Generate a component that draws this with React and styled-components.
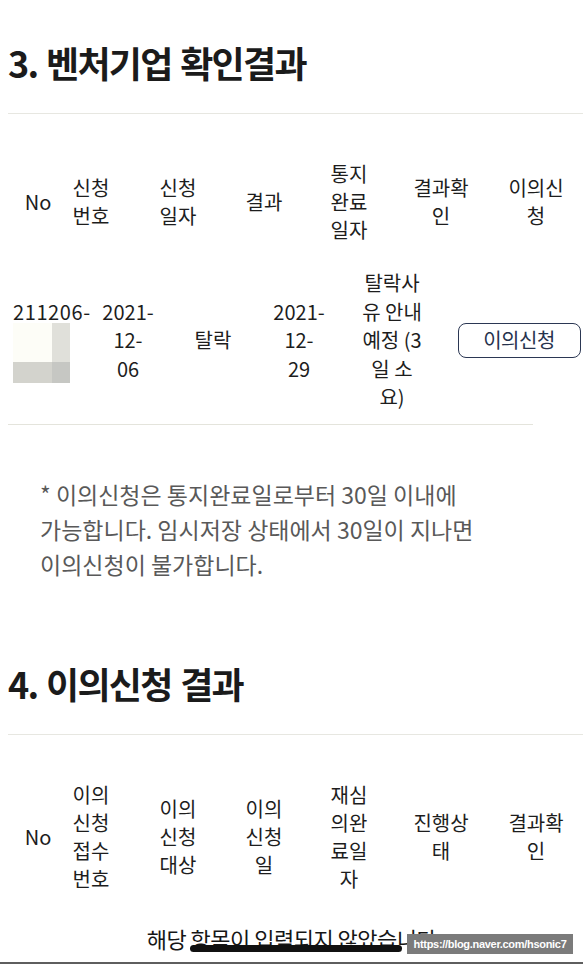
import React from "react";
import styled, { createGlobalStyle } from "styled-components";

const Global = createGlobalStyle`
  html, body { margin: 0; padding: 0; background: #fff; overflow: hidden; }
  body { font-family: "Noto Sans CJK KR", "Noto Sans", sans-serif; color: #1a1a1a; }
`;

const Page = styled.div`
  position: relative;
  width: 583px;
  height: 965px;
  overflow: hidden;
  background: #fff;
`;

const Section = styled.section`
  padding-left: 8px;
  margin-top: ${(p) => p.$top}px;
`;

const Title = styled.h2`
  margin: 0;
  font-size: 36px;
  line-height: 44px;
  font-weight: 700;
  letter-spacing: -1.7px;
  word-spacing: 2px;
  color: #1b1b1b;
  white-space: nowrap;
`;

const Divider = styled.hr`
  margin: 29px 0 0;
  border: 0;
  height: 1px;
  background: #e7e7e1;
`;

const HeadRow = styled.div`
  display: grid;
  grid-template-columns: 60px 46px 128px 44px 126px 58px 132px;
  align-items: center;
  padding-top: 46px;
  font-size: 20px;
  line-height: 28px;
  text-align: center;
  white-space: nowrap;
  color: #1d1d1d;
`;

const Cell = styled.div`
  display: flex;
  flex-direction: column;
  align-items: ${(p) => (p.$left ? "flex-start" : "center")};
  padding-left: ${(p) => (p.$left ? "5px" : "0")};
`;

const DataRow = styled.div`
  display: grid;
  grid-template-columns: 88px 64px 106px 66px 120px 134px;
  align-items: center;
  width: 525px;
  margin-top: 25px;
  padding-bottom: 12px;
  border-bottom: 1px solid #e4e4dc;
  font-size: 20px;
  line-height: 28.5px;
  text-align: center;
  white-space: nowrap;
  color: #1d1d1d;
`;

const IdText = styled.span`
  letter-spacing: 0.6px;
`;

const Mosaic = styled.div`
  display: grid;
  grid-template-columns: 39px 18px;
  grid-template-rows: 39px 21px;
  margin-top: -3px;
  & > span:nth-child(1) { background: #fdfdf7; }
  & > span:nth-child(2) { background: #e0e0da; }
  & > span:nth-child(3) { background: #d3d3cd; }
  & > span:nth-child(4) { background: #c6c7c3; }
`;

const Button = styled.button`
  justify-self: center;
  width: 123px;
  height: 35px;
  border: 1.5px solid #2b3753;
  border-radius: 8px;
  background: #fff;
  color: #26324d;
  font-family: inherit;
  font-size: 20px;
  line-height: 1;
  letter-spacing: -0.5px;
  padding: 0;
`;

const Note = styled.p`
  margin: 52px 0 0;
  padding-left: 32px;
  font-size: 23px;
  line-height: 35px;
  color: #595959;
  white-space: nowrap;
`;

const Empty = styled.p`
  margin: 30px 0 0;
  font-size: 22px;
  line-height: 30px;
  text-align: center;
  color: #161616;
  letter-spacing: -0.5px;
`;

const Watermark = styled.div`
  position: absolute;
  left: 407px;
  top: 934px;
  width: 166px;
  height: 20px;
  background: #7b7b7b;
  color: #fff;
  font-family: "Liberation Sans", Arial, sans-serif;
  font-weight: 700;
  font-size: 11px;
  line-height: 20px;
  letter-spacing: -0.3px;
  text-align: center;
`;

const HomeBar = styled.div`
  position: absolute;
  left: 190px;
  top: 945px;
  width: 212px;
  height: 7px;
  border-radius: 4px;
  background: #111;
`;

const BottomEdge = styled.div`
  position: absolute;
  left: 0;
  right: 0;
  top: 962px;
  height: 2px;
  background: #5e5e5e;
`;

const lines = (arr) => arr.map((t, i) => <span key={i}>{t}</span>);

export default function App() {
  return (
    <Page>
      <Global />
      <Section $top={40}>
        <Title>3. 벤처기업 확인결과</Title>
        <Divider />
        <HeadRow>
          <Cell>No</Cell>
          <Cell>{lines(["신청", "번호"])}</Cell>
          <Cell>{lines(["신청", "일자"])}</Cell>
          <Cell>결과</Cell>
          <Cell>{lines(["통지", "완료", "일자"])}</Cell>
          <Cell>{lines(["결과확", "인"])}</Cell>
          <Cell>{lines(["이의신", "청"])}</Cell>
        </HeadRow>
        <DataRow>
          <Cell $left>
            <IdText>211206-</IdText>
            <Mosaic>
              <span />
              <span />
              <span />
              <span />
            </Mosaic>
          </Cell>
          <Cell>{lines(["2021-", "12-", "06"])}</Cell>
          <Cell>탈락</Cell>
          <Cell>{lines(["2021-", "12-", "29"])}</Cell>
          <Cell>{lines(["탈락사", "유 안내", "예정 (3", "일 소", "요)"])}</Cell>
          <Button>이의신청</Button>
        </DataRow>
        <Note>
          * 이의신청은 통지완료일로부터 30일 이내에
          <br />
          가능합니다. 임시저장 상태에서 30일이 지나면
          <br />
          이의신청이 불가합니다.
        </Note>
      </Section>
      <Section $top={79}>
        <Title>4. 이의신청 결과</Title>
        <Divider />
        <HeadRow>
          <Cell>No</Cell>
          <Cell>{lines(["이의", "신청", "접수", "번호"])}</Cell>
          <Cell>{lines(["이의", "신청", "대상"])}</Cell>
          <Cell>{lines(["이의", "신청", "일"])}</Cell>
          <Cell>{lines(["재심", "의완", "료일", "자"])}</Cell>
          <Cell>{lines(["진행상", "태"])}</Cell>
          <Cell>{lines(["결과확", "인"])}</Cell>
        </HeadRow>
      </Section>
      <Empty>해당 항목이 입력되지 않았습니다</Empty>
      <Watermark>https://blog.naver.com/hsonic7</Watermark>
      <HomeBar />
      <BottomEdge />
    </Page>
  );
}
